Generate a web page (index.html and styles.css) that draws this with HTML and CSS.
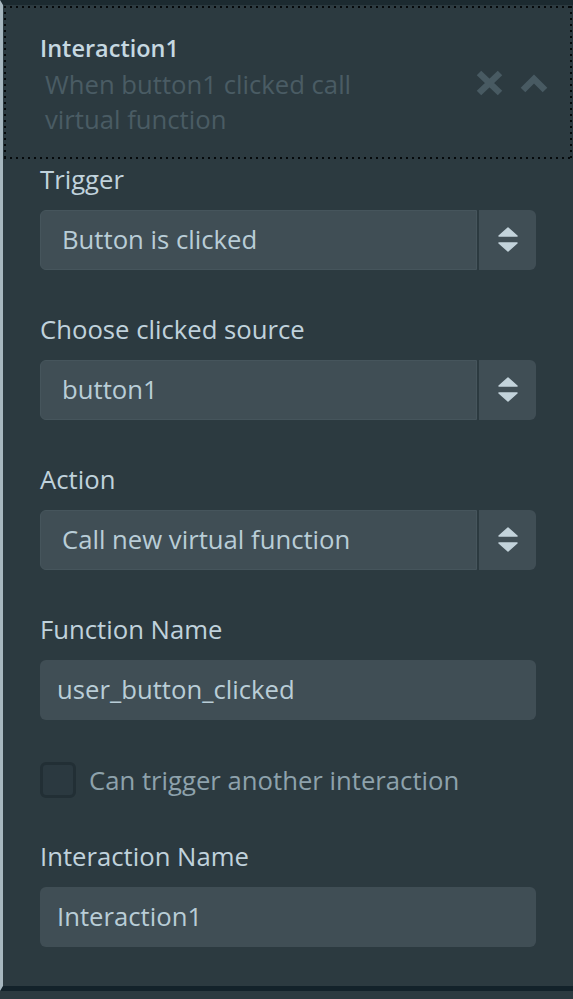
FILE: index.html
```html
<!DOCTYPE html>
<html>
<head>
<meta charset="utf-8">
<link rel="stylesheet" href="styles.css">
</head>
<body>
<div class="panel">
  <div class="header">
    <div class="head-text">
      <div class="title">Interaction1</div>
      <div class="subtitle">When button1 clicked call virtual function</div>
    </div>
    <div class="head-icons">
      <svg class="icon-x" width="27" height="26" viewBox="0 0 27 26"><path d="M3 3 L24 23 M24 3 L3 23" stroke="#485a62" stroke-width="6.5" fill="none"/></svg>
      <svg class="icon-up" width="28" height="20" viewBox="0 0 28 20"><path d="M3 17 L14 6 L25 17" stroke="#485a62" stroke-width="6.5" fill="none" stroke-linejoin="miter"/></svg>
    </div>
  </div>
  <div class="form">
    <div class="field">
      <div class="label">Trigger</div>
      <div class="select">
        <div class="select-value">Button is clicked</div>
        <div class="select-arrows"><svg width="22" height="28" viewBox="0 0 22 28"><path d="M11 2 L20 10 L2 10 Z" fill="#c3d3db" stroke="#c3d3db" stroke-width="1.5" stroke-linejoin="round"/><path d="M2 17 L20 17 L11 25 Z" fill="#c3d3db" stroke="#c3d3db" stroke-width="1.5" stroke-linejoin="round"/></svg></div>
      </div>
    </div>
    <div class="field">
      <div class="label">Choose clicked source</div>
      <div class="select">
        <div class="select-value">button1</div>
        <div class="select-arrows"><svg width="22" height="28" viewBox="0 0 22 28"><path d="M11 2 L20 10 L2 10 Z" fill="#c3d3db" stroke="#c3d3db" stroke-width="1.5" stroke-linejoin="round"/><path d="M2 17 L20 17 L11 25 Z" fill="#c3d3db" stroke="#c3d3db" stroke-width="1.5" stroke-linejoin="round"/></svg></div>
      </div>
    </div>
    <div class="field">
      <div class="label">Action</div>
      <div class="select">
        <div class="select-value">Call new virtual function</div>
        <div class="select-arrows"><svg width="22" height="28" viewBox="0 0 22 28"><path d="M11 2 L20 10 L2 10 Z" fill="#c3d3db" stroke="#c3d3db" stroke-width="1.5" stroke-linejoin="round"/><path d="M2 17 L20 17 L11 25 Z" fill="#c3d3db" stroke="#c3d3db" stroke-width="1.5" stroke-linejoin="round"/></svg></div>
      </div>
    </div>
    <div class="field">
      <div class="label">Function Name</div>
      <div class="input">user_button_clicked</div>
    </div>
    <div class="check-row">
      <div class="checkbox"></div>
      <div class="check-label">Can trigger another interaction</div>
    </div>
    <div class="field">
      <div class="label">Interaction Name</div>
      <div class="input">Interaction1</div>
    </div>
  </div>
</div>
<div class="below"></div>
</body>
</html>
```
FILE: styles.css
```css
html, body {
  margin: 0;
  padding: 0;
  background: #2c3a40;
}
body {
  font-family: "Open Sans", "Noto Sans", sans-serif;
  font-weight: 500;
  color: #b9cdd7;
}
.panel {
  border-left: 3px solid #a7b7bf;
  border-top: 5px solid #1c2a30;
  border-bottom: 5px solid #13222a;
  background: #2c3a40;
}
.header {
  margin: 1px 1px 0 1px;
  height: 153px;
  box-sizing: border-box;
  display: flex;
  justify-content: space-between;
  align-items: flex-start;
  padding: 0 24px 0 36px;
  background:
    linear-gradient(to right, #05090b 2px, transparent 2px) left top / 6px 2px repeat-x,
    linear-gradient(to right, #05090b 2px, transparent 2px) left bottom / 6px 2px repeat-x,
    linear-gradient(to bottom, #05090b 2px, transparent 2px) left top / 2px 6px repeat-y,
    linear-gradient(to bottom, #05090b 2px, transparent 2px) right top / 2px 6px repeat-y;
}
.head-text {
  padding-top: 27px;
}
.title {
  font-size: 23.5px;
  font-weight: 600;
  line-height: 30px;
  color: #c6d8e1;
}
.subtitle {
  margin-top: 4px;
  padding-left: 5px;
  font-size: 25.7px;
  line-height: 35px;
  color: #4a5c64;
  max-width: 350px;
}
.head-icons {
  display: flex;
  align-items: center;
  gap: 17px;
  margin-top: 64px;
}
.form {
  padding: 4px 37px 39px 37px;
  display: flex;
  flex-direction: column;
  gap: 43px;
}
.label {
  font-size: 25.7px;
  line-height: 34px;
  margin-bottom: 13px;
  color: #c0d2dc;
}
.select {
  display: flex;
  gap: 2px;
  height: 60px;
}
.select-value {
  flex: 1;
  background: #404e55;
  border: 1px solid #46555c;
  border-radius: 6px 0 0 6px;
  padding-left: 21px;
  font-size: 25.7px;
  line-height: 58px;
}
.select-arrows {
  width: 57px;
  background: #404e55;
  border-radius: 0 6px 6px 0;
  display: flex;
  align-items: center;
  justify-content: center;
}
.input {
  height: 60px;
  background: #404e55;
  border-radius: 6px;
  padding-left: 17px;
  font-size: 25.7px;
  line-height: 60px;
}
.check-row {
  display: flex;
  align-items: center;
  gap: 13px;
  height: 36px;
  margin-top: -1px;
  margin-bottom: -1px;
}
.checkbox {
  width: 30px;
  height: 30px;
  border: 3px solid #222f35;
  border-radius: 6px;
  background: #2b3940;
}
.check-label {
  font-size: 25.7px;
  color: #8ea2ac;
}
.below {
  height: 20px;
  background: #2c3a40;
}
```
